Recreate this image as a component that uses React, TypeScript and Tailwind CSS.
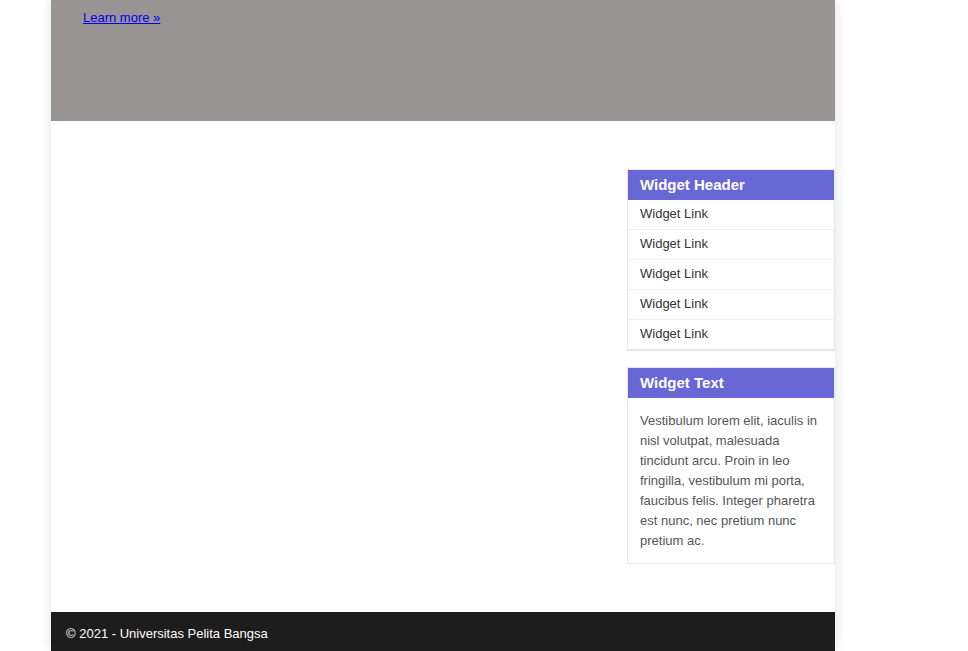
import React from 'react';

const links = ['Widget Link', 'Widget Link', 'Widget Link', 'Widget Link', 'Widget Link'];

function Widget({ title, children }: { title: string; children: React.ReactNode }) {
  return (
    <div className="border border-[#e8e8e8] bg-white">
      <h3 className="h-[30px] bg-[#6767d6] px-3 text-[15px] font-bold leading-[30px] text-white">{title}</h3>
      {children}
    </div>
  );
}

export default function App() {
  return (
    <div className="h-[651px] overflow-hidden bg-white font-['Liberation_Sans',Arial,sans-serif]">
      <div className="ml-[51px] flex h-full w-[784px] flex-col bg-white shadow-[0_0_12px_rgba(0,0,0,0.12)]">
        {/* Hero (scrolled) */}
        <section className="h-[121px] bg-[#989493] px-8 pt-[5px]">
          <a href="#" className="text-[13px] text-[#0000ee] underline">
            Learn more »
          </a>
        </section>

        {/* Content */}
        <div className="flex flex-1 pt-[48px]">
          <main className="flex-1" />
          <aside className="flex w-[208px] flex-col gap-[16px]">
            <Widget title="Widget Header">
              <ul className="border-b border-[#e8e8e8]">
                {links.map((l, i) => (
                  <li key={i} className="border-t border-[#eeeeee] first:border-t-0">
                    <a
                      href="#"
                      className="block h-[29px] px-3 text-[13px] leading-[28px] text-[#333]"
                    >
                      {l}
                    </a>
                  </li>
                ))}
              </ul>
            </Widget>
            <Widget title="Widget Text">
              <p className="px-3 pb-[12px] pt-[13px] text-[13px] leading-[20px] text-[#555]">
                Vestibulum lorem elit, iaculis in nisl volutpat, malesuada tincidunt arcu. Proin in leo fringilla,
                vestibulum mi porta, faucibus felis. Integer pharetra est nunc, nec pretium nunc pretium ac.
              </p>
            </Widget>
          </aside>
        </div>

        {/* Footer */}
        <footer className="h-[39px] bg-[#1d1d1d] px-[15px] text-[13px] leading-[43px] text-white">
          © 2021 - Universitas Pelita Bangsa
        </footer>
      </div>
    </div>
  );
}
